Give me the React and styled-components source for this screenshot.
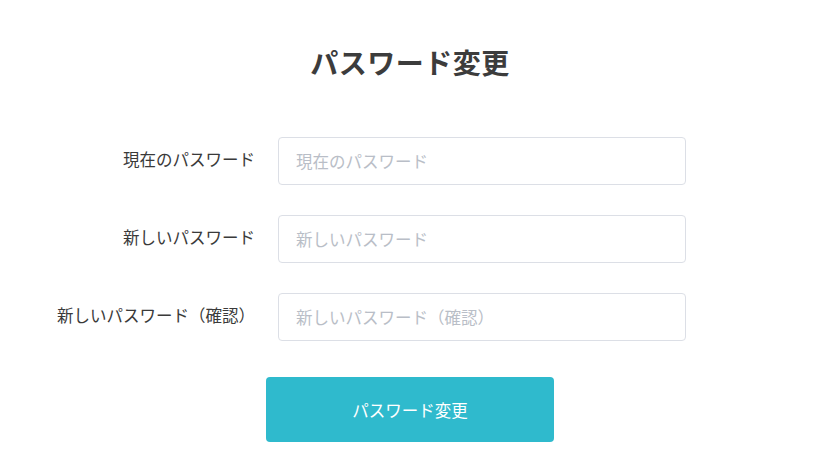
import React from "react";
import styled, { createGlobalStyle } from "styled-components";

const Global = createGlobalStyle`
  html, body { margin: 0; padding: 0; background: #ffffff; }
  body { font-family: "Noto Sans CJK JP", "Noto Sans", sans-serif; }
  * { box-sizing: border-box; }
`;

const Page = styled.div`
  width: 816px;
  height: 460px;
  display: flex;
  flex-direction: column;
  align-items: center;
  padding-top: 41px;
`;

const Title = styled.h1`
  margin: 0;
  font-size: 28px;
  line-height: 42px;
  font-weight: 700;
  color: #3c3c3c;
  letter-spacing: 0.5px;
  padding-left: 4px;
`;

const Form = styled.form`
  display: grid;
  grid-template-columns: 203px 408px;
  column-gap: 23px;
  row-gap: 30px;
  margin-top: 54px;
  margin-left: -78px;
`;

const Label = styled.label`
  text-align: right;
  align-self: center;
  font-size: 16.5px;
  line-height: 24px;
  color: #3a3a3a;
  padding-bottom: 5px;
  white-space: nowrap;
`;

const Input = styled.input`
  width: 408px;
  height: 48px;
  border: 1px solid #dcdfe6;
  border-radius: 4px;
  padding: 0 17px;
  font-family: inherit;
  font-size: 16.5px;
  color: #333;
  outline: none;
  &::placeholder { color: #b9bec7; }
`;

const Button = styled.button`
  margin-top: 36px;
  margin-left: 4px;
  width: 288px;
  height: 65px;
  border: none;
  border-radius: 4px;
  background: #2fbacd;
  color: #ffffff;
  font-family: inherit;
  font-size: 16.5px;
  cursor: pointer;
`;

const fields = [
  { id: "current", label: "現在のパスワード" },
  { id: "new", label: "新しいパスワード" },
  { id: "confirm", label: "新しいパスワード（確認）" },
];

export default function App() {
  return (
    <>
      <Global />
      <Page>
        <Title>パスワード変更</Title>
        <Form onSubmit={(e) => e.preventDefault()}>
          {fields.map((f) => (
            <React.Fragment key={f.id}>
              <Label htmlFor={f.id}>{f.label}</Label>
              <Input id={f.id} type="password" placeholder={f.label} />
            </React.Fragment>
          ))}
        </Form>
        <Button type="button">パスワード変更</Button>
      </Page>
    </>
  );
}
